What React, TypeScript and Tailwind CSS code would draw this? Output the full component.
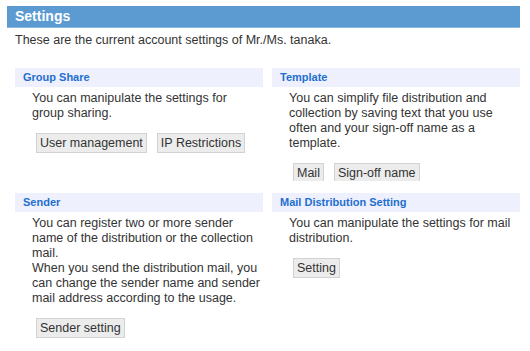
const btn =
  "inline-flex h-[20px] items-center border border-[#d2d2d2] bg-[#ececec] px-[3px] text-[12.5px] leading-none text-[#333]";

interface SectionProps {
  title: string;
  lines: string[];
  buttons: string[];
}

function Section({ title, lines, buttons }: SectionProps) {
  return (
    <div className="overflow-hidden">
      <div className="flex h-[19px] items-center bg-[#eef0fd] pl-2 text-[11px] font-bold text-[#1f6fd0]">
        {title}
      </div>
      <div className="mt-[4px] pl-[17px] pr-2 text-[12.5px] leading-[15px] text-[#333]">
        {lines.map((l, i) => (
          <p key={i} className="whitespace-nowrap">
            {l}
          </p>
        ))}
      </div>
      <div className="mt-[12px] flex gap-[10px] pl-[21px]">
        {buttons.map((b) => (
          <span key={b} className={btn}>
            {b}
          </span>
        ))}
      </div>
    </div>
  );
}

export default function App() {
  return (
    <div
      className="h-[351px] w-[530px] overflow-hidden bg-white pl-[7px] pr-[10px] pt-[6px]"
      style={{ fontFamily: '"Liberation Sans", Arial, sans-serif' }}
    >
      <div className="flex h-[22px] items-center border-b border-[#8bb6dd] bg-[#5b9bd2] pl-2 text-[14px] font-bold text-white">
        Settings
      </div>
      <p className="mt-[4px] pl-2 text-[12.5px] leading-[16px] text-[#333]">
        These are the current account settings of Mr./Ms. tanaka.
      </p>
      <div className="mt-[20px] grid grid-cols-2 grid-rows-[113px_auto] gap-x-[9px] gap-y-[12px] pl-2">
        <Section
          title="Group Share"
          lines={["You can manipulate the settings for", "group sharing."]}
          buttons={["User management", "IP Restrictions"]}
        />
        <Section
          title="Template"
          lines={[
            "You can simplify file distribution and",
            "collection by saving text that you use",
            "often and your sign-off name as a",
            "template.",
          ]}
          buttons={["Mail", "Sign-off name"]}
        />
        <Section
          title="Sender"
          lines={[
            "You can register two or more sender",
            "name of the distribution or the collection",
            "mail.",
            "When you send the distribution mail, you",
            "can change the sender name and sender",
            "mail address according to the usage.",
          ]}
          buttons={["Sender setting"]}
        />
        <Section
          title="Mail Distribution Setting"
          lines={["You can manipulate the settings for mail", "distribution."]}
          buttons={["Setting"]}
        />
      </div>
    </div>
  );
}
